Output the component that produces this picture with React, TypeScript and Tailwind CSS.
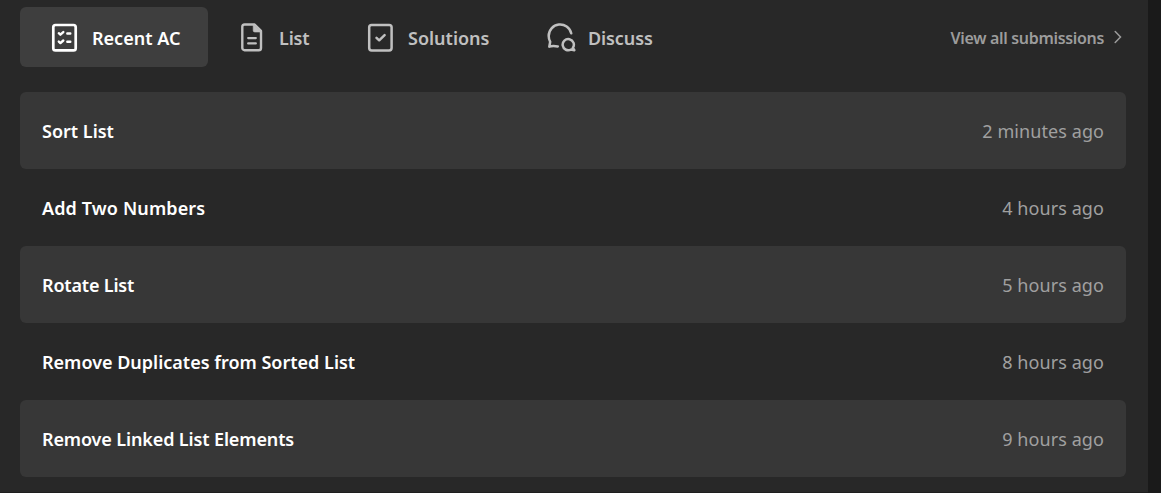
import type { ReactNode } from 'react'

interface Tab {
  label: string
  icon: ReactNode
  className: string
  labelClass: string
}

interface Submission {
  title: string
  time: string
  titleClass: string
}

function RecentIcon() {
  return (
    <svg width="30" height="30" viewBox="0 0 30 30" fill="none" stroke="currentColor" strokeLinecap="round" strokeLinejoin="round">
      <rect x="3.3" y="2" width="22.4" height="25.4" rx="2.2" strokeWidth="2.7" />
      <path d="M8.8 10.2l1.6 1.5 2.9-2.6M8.8 18.6l1.6 1.5 2.9-2.6M17.3 10.5h3M17.3 18.8h3" strokeWidth="2.4" />
    </svg>
  )
}

function ListIcon() {
  return (
    <svg width="30" height="30" viewBox="0 0 30 30" fill="none" stroke="currentColor" strokeLinecap="round" strokeLinejoin="round">
      <path d="M6.6 1.5h10l6.4 6.4v17a2.3 2.3 0 0 1-2.3 2.3H6.6a2.3 2.3 0 0 1-2.3-2.3V3.8a2.3 2.3 0 0 1 2.3-2.3z" strokeWidth="2.4" />
      <path d="M15.2 1.5v5.9a1.6 1.6 0 0 0 1.6 1.6h6.4z" fill="currentColor" strokeWidth="0.6" />
      <path d="M10.2 15.1h7.6M10.2 20.4h7.6" strokeWidth="2.3" />
    </svg>
  )
}

function SolutionsIcon() {
  return (
    <svg width="30" height="30" viewBox="0 0 30 30" fill="none" stroke="currentColor" strokeLinecap="round" strokeLinejoin="round">
      <rect x="3.2" y="1.9" width="22.4" height="25.5" rx="2.4" strokeWidth="2.5" />
      <path d="M10.5 14.8l2.7 2.5 5.4-5.2" strokeWidth="2.5" />
    </svg>
  )
}

function DiscussIcon() {
  return (
    <svg width="30" height="30" viewBox="0 0 30 30" fill="none" stroke="currentColor" strokeWidth="2.5" strokeLinecap="round" strokeLinejoin="round">
      <path d="M25.2 10.3A11.4 11.4 0 0 0 2.7 12.9c0 2.3.6 4.2 1.5 5.9l-.9 4.9c2.4-1 5-.8 8.5-.3" />
      <path d="M26.9 24.8l1.4 2.4-3.2-.7a5.6 5.6 0 1 1 1.8-1.7z" />
    </svg>
  )
}

const tabs: Tab[] = [
  { label: 'Recent AC', icon: <RecentIcon />, className: 'w-[188px] bg-[#3e3e3e] text-white', labelClass: 'ml-3' },
  { label: 'List', icon: <ListIcon />, className: 'w-[128px]', labelClass: 'ml-[11px] tracking-[-0.2px]' },
  { label: 'Solutions', icon: <SolutionsIcon />, className: 'w-[180px]', labelClass: 'ml-3' },
  { label: 'Discuss', icon: <DiscussIcon />, className: 'w-[160px]', labelClass: 'ml-3 tracking-[-0.1px]' },
]

const submissions: Submission[] = [
  { title: 'Sort List', time: '2 minutes ago', titleClass: '' },
  { title: 'Add Two Numbers', time: '4 hours ago', titleClass: 'tracking-[0.12px]' },
  { title: 'Rotate List', time: '5 hours ago', titleClass: 'tracking-[-0.18px]' },
  { title: 'Remove Duplicates from Sorted List', time: '8 hours ago', titleClass: '' },
  { title: 'Remove Linked List Elements', time: '9 hours ago', titleClass: 'tracking-[-0.13px]' },
]

export default function App() {
  return (
    <div className="h-[493px] w-[1161px] overflow-hidden bg-[#1a1a1a] font-['Noto_Sans','Open_Sans',sans-serif] text-lg">
      <div className="h-full w-[1148px] bg-[#282828] border-b border-[#1e1e1e] pt-[7px] pl-5 pr-[22px]">
        {/* Tabs */}
        <div className="flex h-[60px] items-center justify-between">
          <div className="flex h-full font-semibold text-[#c0c0c0]">
            {tabs.map((tab) => (
              <button key={tab.label} className={`flex items-center rounded-md whitespace-nowrap pl-[30px] pt-0.5 ${tab.className}`}>
                <span className="shrink-0">{tab.icon}</span>
                <span className={tab.labelClass}>{tab.label}</span>
              </button>
            ))}
          </div>
          <a className="flex items-center whitespace-nowrap pt-0.5 text-base font-semibold tracking-[-0.32px] text-[#9c9c9c]">
            View all submissions
            <svg className="ml-2.5 mr-1 -mt-0.5" width="8" height="14" viewBox="0 0 8 14" fill="none" stroke="currentColor" strokeWidth="1.5" strokeLinecap="round">
              <path d="M1.2 1.5L6.5 7l-5.3 5.5" />
            </svg>
          </a>
        </div>

        {/* Submissions */}
        <div className="mt-[25px]">
          {submissions.map((item) => (
            <div key={item.title} className="flex h-[77px] items-center justify-between rounded-md px-[22px] odd:bg-[#373737]">
              <span className={`font-semibold text-white ${item.titleClass}`}>{item.title}</span>
              <span className="tracking-[0.08px] text-[#a0a0a0]">{item.time}</span>
            </div>
          ))}
        </div>
      </div>
    </div>
  )
}
